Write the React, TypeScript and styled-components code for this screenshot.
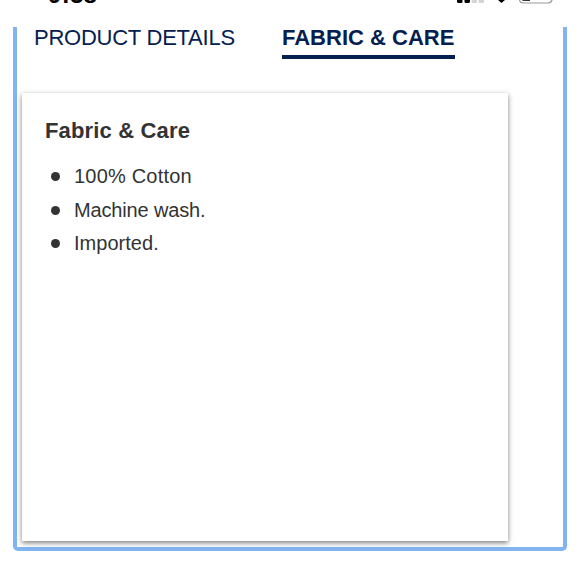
import styled, { createGlobalStyle } from "styled-components";

const GlobalStyle = createGlobalStyle`
  * {
    box-sizing: border-box;
  }
  body {
    margin: 0;
    background: #fff;
    color: #333;
    font-family: "Liberation Sans", Arial, sans-serif;
    overflow: hidden;
  }
`;

const Screen = styled.div`
  height: 580px;
  overflow: hidden;
  background: #fff;
`;

const StatusBar = styled.header`
  height: 27px;
  padding: 0 27px 0 48px;
  display: flex;
  justify-content: space-between;
  align-items: flex-start;
`;

const Clock = styled.time`
  margin-top: -18px;
  height: 25px;
  font-size: 24px;
  line-height: 25px;
  font-weight: 700;
  letter-spacing: 0.3px;
  color: #000;
`;

const Frame = styled.main`
  width: 554px;
  height: 524px;
  margin-left: 13px;
  border: 4px solid #82b5f0;
  border-top: none;
  border-radius: 0 0 5px 5px;
`;

const Tabs = styled.nav`
  height: 66px;
  padding-left: 17px;
  display: flex;
  align-items: flex-start;
  gap: 46px;
`;

const Tab = styled.button<{ $active?: boolean; $width: number }>`
  width: ${({ $width }) => $width}px;
  height: 32px;
  padding: 0 0 6px;
  border: none;
  border-bottom: 4px solid ${({ $active }) => ($active ? "#04204f" : "transparent")};
  background: none;
  color: #04204f;
  font-family: inherit;
  font-size: 22px;
  line-height: 22px;
  font-weight: ${({ $active }) => ($active ? 700 : 400)};
  letter-spacing: ${({ $active }) => ($active ? "0" : "-0.25px")};
  text-align: left;
  white-space: nowrap;
`;

const Card = styled.section`
  width: 486px;
  height: 448px;
  margin-left: 5px;
  padding: 25px 23px;
  background: #fff;
  box-shadow: 0 2px 5px rgba(0, 0, 0, 0.5);
`;

const Title = styled.h2`
  margin: 0 0 16px;
  font-size: 22px;
  line-height: 26px;
  font-weight: 700;
  letter-spacing: 0.16px;
`;

const List = styled.ul`
  margin: 0;
  padding: 0 0 0 6px;
  list-style: none;
`;

const Item = styled.li<{ $tracking: number }>`
  display: flex;
  align-items: center;
  gap: 14px;
  height: 33.6px;
  font-size: 20px;
  letter-spacing: ${({ $tracking }) => $tracking}px;
  &::before {
    content: "";
    width: 9px;
    height: 9px;
    border-radius: 50%;
    background: #333;
  }
`;

const details = [
  { text: "100% Cotton", tracking: 0.2 },
  { text: "Machine wash.", tracking: -0.15 },
  { text: "Imported.", tracking: 0.03 },
];

// Signal, wifi and battery, scrolled partly off the top
const StatusIcons = () => (
  <svg width="96" height="5" viewBox="0 0 96 5">
    <path d="M0 0H5.5V1.5Q5.5 3 4 3H1.5Q0 3 0 1.5ZM7.5 0H13V1.5Q13 3 11.5 3H9Q7.5 3 7.5 1.5Z" fill="#000" />
    <path d="M14.5 0H20V1.5Q20 3 18.5 3H16Q14.5 3 14.5 1.5ZM21.5 0H27V1.5Q27 3 25.5 3H23Q21.5 3 21.5 1.5Z" fill="#d5d5d5" />
    <path d="M41 0H48L44.5 3Z" fill="#000" />
    <path d="M62.5 -4V-1Q62.5 3 66.5 3H91Q95 3 95 -1V-4" fill="none" stroke="#999" strokeWidth="1.2" />
    <path d="M65 0H73V1H67Q65 1 65 0Z" fill="#333" />
  </svg>
);

export default function App() {
  return (
    <>
      <GlobalStyle />
      <Screen>
        <StatusBar>
          <Clock>9:38</Clock>
          <StatusIcons />
        </StatusBar>
        <Frame>
          <Tabs>
            <Tab $width={202}>PRODUCT DETAILS</Tab>
            <Tab $active $width={173}>
              FABRIC &amp; CARE
            </Tab>
          </Tabs>
          <Card>
            <Title>Fabric &amp; Care</Title>
            <List>
              {details.map(({ text, tracking }) => (
                <Item key={text} $tracking={tracking}>
                  {text}
                </Item>
              ))}
            </List>
          </Card>
        </Frame>
      </Screen>
    </>
  );
}
